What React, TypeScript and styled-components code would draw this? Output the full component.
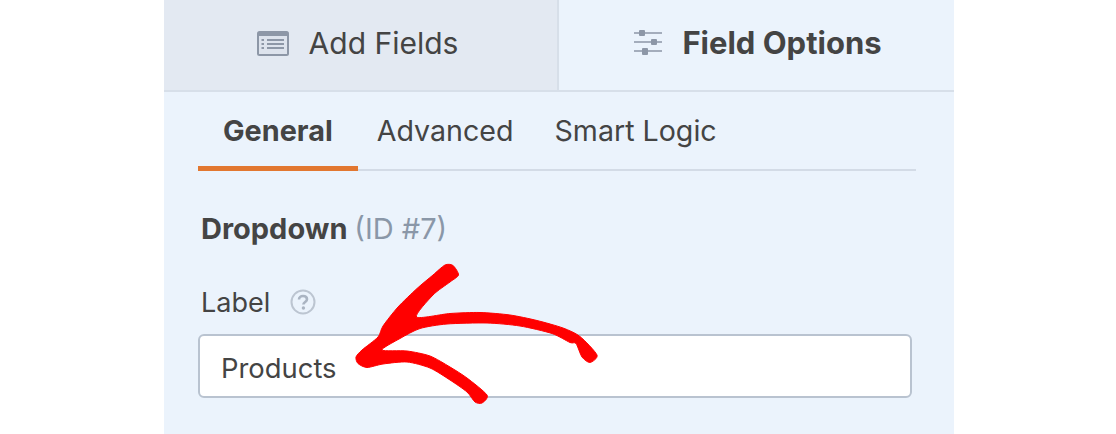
import styled, { createGlobalStyle } from "styled-components";

const GlobalStyle = createGlobalStyle`
  html, body {
    margin: 0;
    padding: 0;
    background: #fff;
  }
  body {
    width: 1116px;
    height: 434px;
    overflow: hidden;
    font-family: Inter, "Liberation Sans", sans-serif;
    color: #444;
  }
`;

const Page = styled.div`
  display: flex;
  justify-content: center;
  width: 1116px;
  height: 434px;
  position: relative;
  overflow: hidden;
`;

const Panel = styled.div`
  width: 790px;
  height: 434px;
  margin-left: 2px;
  background: #ebf3fc;
`;

const TopTabs = styled.div`
  display: flex;
  height: 92px;
  box-sizing: border-box;
  border-bottom: 2px solid #d7dfe9;
`;

const TopTab = styled.div<{ $active?: boolean }>`
  display: flex;
  align-items: center;
  justify-content: center;
  gap: 20px;
  box-sizing: border-box;
  width: 395px;
  font-size: ${(props) => (props.$active ? "31px" : "30px")};
  font-weight: ${(props) => (props.$active ? 700 : 400)};
  background: ${(props) => (props.$active ? "#ebf3fc" : "#e3e9f2")};
  border-right: ${(props) => (props.$active ? "none" : "2px solid #d7dfe9")};
  padding: ${(props) => (props.$active ? "0 0 6px 3px" : "0 6px 4px 0")};
`;

const Body = styled.div`
  padding: 0 38px 0 34px;
`;

const SubTabs = styled.div`
  display: flex;
  height: 79px;
  box-sizing: border-box;
  border-bottom: 2px solid #d3dbe6;
`;

const SubTab = styled.div<{ $active?: boolean }>`
  display: flex;
  align-items: center;
  height: 79px;
  box-sizing: border-box;
  padding: 2px 25px 0;
  margin-right: ${(props) => (props.$active ? "-6px" : "-9px")};
  font-size: ${(props) => (props.$active ? "28.8px" : "28.6px")};
  font-weight: ${(props) => (props.$active ? 700 : 400)};
  border-bottom: 5px solid ${(props) => (props.$active ? "#e27730" : "transparent")};
`;

const FieldTitle = styled.div`
  margin-top: 42px;
  margin-left: 3px;
  font-size: 29px;
  line-height: 32px;
  font-weight: 700;
`;

const FieldId = styled.span`
  font-weight: 400;
  color: #8a97a8;
`;

const LabelRow = styled.div`
  display: flex;
  align-items: center;
  gap: 20px;
  margin-top: 41px;
  margin-left: 3px;
  height: 32px;
  font-size: 27px;
`;

const HelpIcon = styled.svg`
  width: 26px;
  height: 26px;
  display: block;
`;

const TextInput = styled.div`
  display: flex;
  align-items: center;
  box-sizing: border-box;
  margin-top: 16px;
  width: 714px;
  height: 64px;
  padding: 4px 21px 0;
  background: #fff;
  border: 2px solid #b9c3d0;
  border-radius: 6px;
  font-size: 27.4px;
`;

const Arrow = styled.svg`
  position: absolute;
  left: 0;
  top: 0;
  width: 1116px;
  height: 434px;
  pointer-events: none;
`;

// outline of the hand drawn arrow, traced from the picture
const arrowOutline: [number, number][] = [
  [445, 265], [453, 265.500], [458.500, 275], [450, 282], [433, 295], [416.500, 317],
  [450, 313.500], [480, 312.500], [510, 315], [537, 320.500], [563, 328], [580, 336.500],
  [597, 355], [590, 362.500], [582, 357], [576, 343.500], [570, 342.500], [552, 333.500],
  [520, 326], [487, 323], [447, 324], [420, 328.500], [400, 338.500], [382, 350],
  [407, 351], [430, 356], [450, 367], [467, 378], [487, 395], [482, 403], [475, 402],
  [467, 392], [450, 380], [430, 368], [407, 362], [383, 364], [367, 367.500],
  [358, 363.500], [356, 357], [362, 350], [378, 337], [383, 326], [398, 307],
  [417, 288.500], [433, 275],
];

// closed catmull-rom through the traced points
function smoothPath(points: [number, number][]) {
  const n = points.length;
  let d = `M${points[0][0]} ${points[0][1]}`;
  for (let i = 0; i < n; i++) {
    const p0 = points[(i - 1 + n) % n];
    const p1 = points[i];
    const p2 = points[(i + 1) % n];
    const p3 = points[(i + 2) % n];
    const c1x = p1[0] + (p2[0] - p0[0]) / 8;
    const c1y = p1[1] + (p2[1] - p0[1]) / 8;
    const c2x = p2[0] - (p3[0] - p1[0]) / 8;
    const c2y = p2[1] - (p3[1] - p1[1]) / 8;
    d += `C${c1x} ${c1y} ${c2x} ${c2y} ${p2[0]} ${p2[1]}`;
  }
  return d + "Z";
}

function FormIcon() {
  return (
    <svg width="32" height="25" viewBox="0 0 32 25">
      <rect x="0" y="0" width="32" height="25" rx="2.5" fill="#8d97a7" />
      <rect x="2" y="5" width="28" height="18" fill="#dde3ed" />
      <path d="M10 9h17M10 13h17M10 17h17" stroke="#8d97a7" strokeWidth="2" />
      <path d="M4.500 9h2.500M4.500 13h2.500M4.500 17h2.500" stroke="#8d97a7" strokeWidth="2" />
    </svg>
  );
}

function SlidersIcon() {
  return (
    <svg width="28" height="26" viewBox="0 0 28 26">
      <path d="M0 4h28M0 13h28M0 22h28" stroke="#8d97a7" strokeWidth="1.600" />
      <rect x="5" y="1" width="6" height="6" rx="1" fill="#8d97a7" />
      <rect x="17" y="10" width="6" height="6" rx="1" fill="#8d97a7" />
      <rect x="8" y="19" width="6" height="7" rx="1" fill="#8d97a7" />
    </svg>
  );
}

export default function App() {
  return (
    <>
      <GlobalStyle />
      <Page>
        <Panel>
          <TopTabs>
            <TopTab>
              <FormIcon />
              Add Fields
            </TopTab>
            <TopTab $active>
              <SlidersIcon />
              Field Options
            </TopTab>
          </TopTabs>
          <Body>
            <SubTabs>
              <SubTab $active>General</SubTab>
              <SubTab>Advanced</SubTab>
              <SubTab>Smart Logic</SubTab>
            </SubTabs>
            <FieldTitle>
              Dropdown <FieldId>(ID #7)</FieldId>
            </FieldTitle>
            <LabelRow>
              Label
              <HelpIcon viewBox="0 0 26 26">
                <circle cx="13" cy="13" r="11.500" fill="none" stroke="#bcc5d1" strokeWidth="2" />
                <path
                  d="M9 10.500c0-2.300 1.800-3.500 4-3.500s4 1.200 4 3.300c0 2.600-3.600 2.700-3.600 5.200"
                  fill="none"
                  stroke="#aab4c2"
                  strokeWidth="2.600"
                />
                <circle cx="13.400" cy="19" r="1.700" fill="#aab4c2" />
              </HelpIcon>
            </LabelRow>
            <TextInput>Products</TextInput>
          </Body>
        </Panel>
        <Arrow viewBox="0 0 1116 434">
          <path
            d={smoothPath(arrowOutline)}
            fill="#ff0000"
            stroke="#ff0000"
            strokeWidth="1"
            strokeLinejoin="round"
          />
        </Arrow>
      </Page>
    </>
  );
}
